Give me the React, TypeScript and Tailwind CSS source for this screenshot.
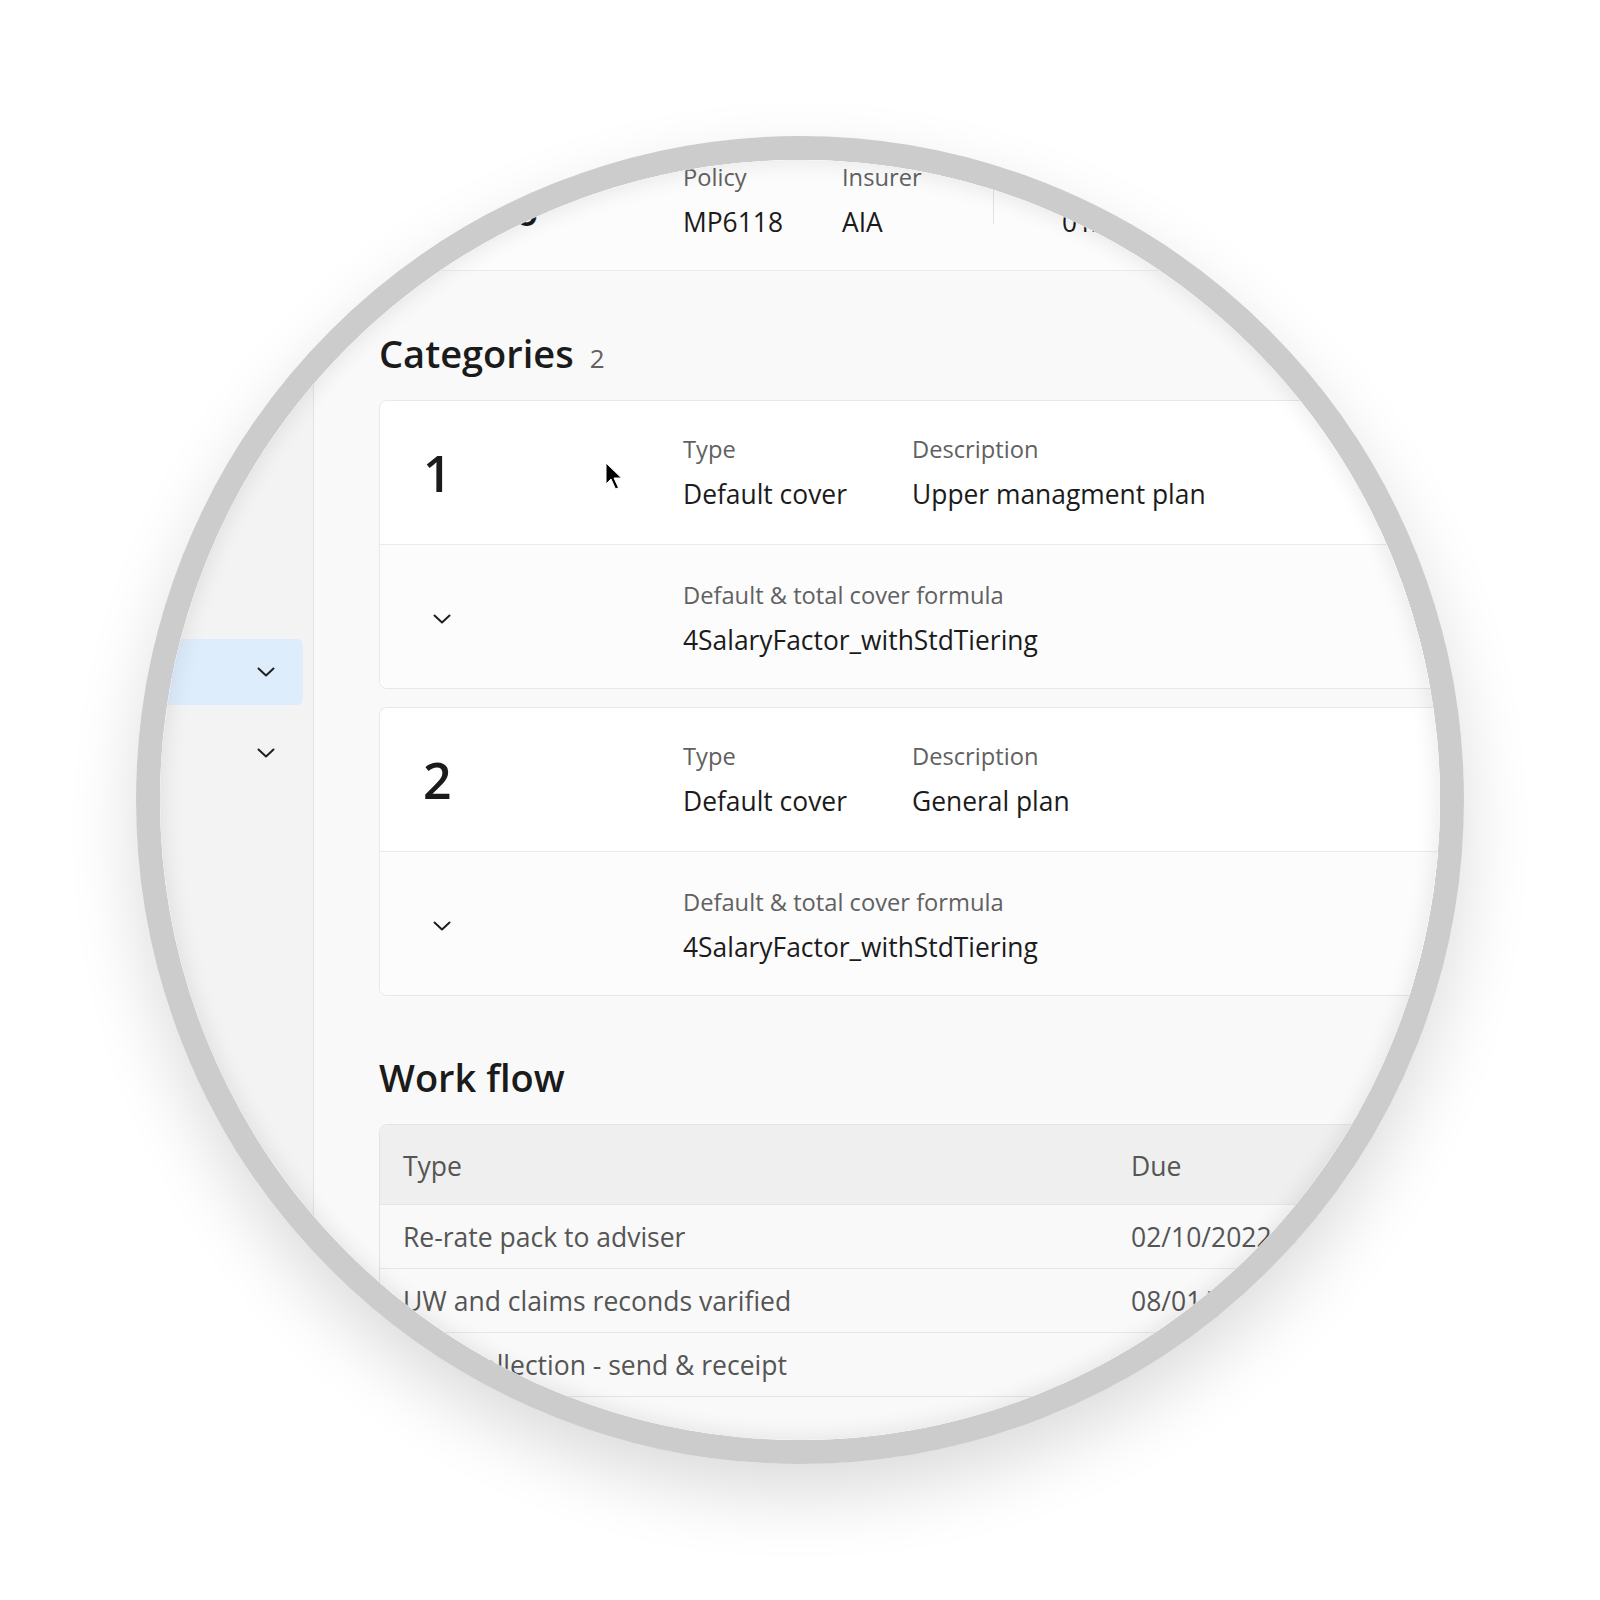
import type { ReactNode } from 'react';

function Chevron() {
  return (
    <svg width="18" height="10" viewBox="0 0 18 10" fill="none">
      <path d="M1.5 1.5 9 8.5l7.5-7" stroke="#1f1f1f" strokeWidth="2" strokeLinecap="round" strokeLinejoin="round" />
    </svg>
  );
}

function Cursor() {
  return (
    <svg width="20" height="32" viewBox="0 0 20 32" className="absolute left-[605px] top-[462px]">
      <path d="M1 1v21l5-5 4.5 10 3-1.3L9 16h7.5z" fill="#000" stroke="#fff" strokeWidth="1" strokeLinejoin="round" />
    </svg>
  );
}

function Field({ label, value, className = '' }: { label: string; value: ReactNode; className?: string }) {
  return (
    <div className={`flex flex-col ${className}`}>
      <span className="text-[23.7px] leading-[32px] text-[#616161]">{label}</span>
      <span className="mt-[11px] whitespace-nowrap text-[26.4px] leading-[36px] text-[#1b1b1b]">{value}</span>
    </div>
  );
}

function CategoryCard({ n, type, desc, formula }: { n: string; type: string; desc: string; formula: string }) {
  return (
    <div className="overflow-hidden rounded-lg border border-[#e8e8e8] bg-white">
      <div className="flex h-[143px] items-center pl-[43px]">
        <div className="w-[260px] text-[50px] font-semibold leading-none text-[#1b1b1b]">{n}</div>
        <Field label="Type" value={type} className="w-[229px]" />
        <Field label="Description" value={desc} />
      </div>
      <div className="flex h-[144px] items-center border-t border-[#ececec] bg-[#fcfcfc] pl-[53px] pt-[4px]">
        <div className="w-[250px]">
          <Chevron />
        </div>
        <Field label="Default & total cover formula" value={formula} />
      </div>
    </div>
  );
}

const workflow = [
  { type: 'Re-rate pack to adviser', due: '02/10/2022' },
  { type: 'UW and claims reconds varified', due: '08/01/2022' },
  { type: 'Data collection - send & receipt', due: '15/12/2021' },
];

export default function App() {
  return (
    <div className="flex h-[1600px] w-[1600px] items-center justify-center bg-white font-['Open_Sans','Noto_Sans',sans-serif]">
      {/* Magnifier lens */}
      <div className="relative h-[1328px] w-[1328px] overflow-hidden rounded-full border-[24px] border-[#cccccc] shadow-[0_30px_70px_rgba(0,0,0,0.14)]">
        <div className="relative ml-[-160px] mt-[-160px] flex h-[1600px] w-[1600px]">
          {/* Sidebar */}
          <aside className="flex w-[314px] shrink-0 flex-col gap-[15px] border-r border-[#e3e3e3] bg-[#f3f3f3] pl-[10px] pr-[10px] pt-[639px]">
            <div className="flex h-[66px] items-center justify-end rounded-md bg-[#deedfc] pr-[28px]">
              <Chevron />
            </div>
            <div className="flex h-[66px] items-center justify-end pr-[28px]">
              <Chevron />
            </div>
          </aside>

          {/* Main */}
          <main className="flex flex-1 flex-col bg-[#f9f9f9]">
            <header className="flex h-[271px] items-end border-b border-[#ebebeb] bg-[#fcfcfc] pb-[30px] pl-[65px]">
              <div className="mb-[5px] w-[304px] text-[38px] font-semibold leading-[48px] text-[#1b1b1b]">Acme Co</div>
              <Field label="Policy" value="MP6118" className="w-[159px]" />
              <Field label="Insurer" value="AIA" className="w-[151px]" />
              <div className="mb-[16px] h-[72px] w-px bg-[#e3e3e3]" />
              <Field label="Start date" value="01/10/2022" className="ml-[68px]" />
            </header>

            <section className="flex flex-col pl-[65px] pr-[40px] pt-[58px]">
              <div className="flex items-baseline">
                <h2 className="text-[38px] font-semibold leading-[48px] text-[#1b1b1b]">Categories</h2>
                <span className="ml-[16px] text-[26px] text-[#616161]">2</span>
              </div>

              <div className="mt-[22px] flex flex-col gap-[18px]">
                <CategoryCard n="1" type="Default cover" desc="Upper managment plan" formula="4SalaryFactor_withStdTiering" />
                <CategoryCard n="2" type="Default cover" desc="General plan" formula="4SalaryFactor_withStdTiering" />
              </div>

              <h2 className="mt-[57px] text-[38px] font-semibold leading-[48px] text-[#1b1b1b]">Work flow</h2>

              <div className="mt-[23px] overflow-hidden rounded-t-lg border border-[#e4e4e4] text-[26.5px] leading-[36px] text-[#555555]">
                <div className="flex h-[79px] items-center bg-[#efefef] pl-[23px] pt-[2px]">
                  <div className="w-[728px]">Type</div>
                  <div>Due</div>
                </div>
                {workflow.map((row) => (
                  <div key={row.type} className="flex h-[64px] items-center border-t border-[#e6e6e6] bg-[#f9f9f9] pl-[23px]">
                    <div className="w-[728px]">{row.type}</div>
                    <div>{row.due}</div>
                  </div>
                ))}
              </div>
            </section>
          </main>

          <Cursor />
        </div>
        {/* inner rim shading */}
        <div className="pointer-events-none absolute inset-0 rounded-full shadow-[inset_0_0_22px_2px_rgba(0,0,0,0.09)]" />
      </div>
    </div>
  );
}
